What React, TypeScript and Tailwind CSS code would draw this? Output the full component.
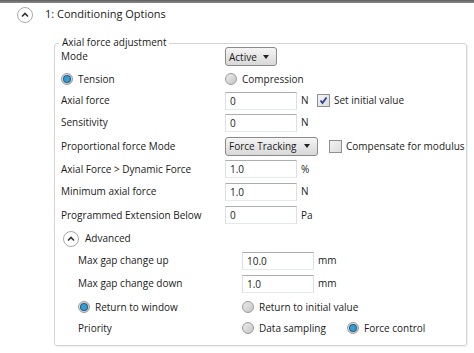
import React from 'react';

const font = { fontFamily: '"Open Sans", "Noto Sans", "Liberation Sans", sans-serif' };

function Chevron({ size = 16 }: { size?: number }) {
  return (
    <div
      className="rounded-full border border-[#a9a9a9] bg-white flex items-center justify-center shrink-0"
      style={{ width: size, height: size }}
    >
      <svg width="8" height="6" viewBox="0 0 8 6">
        <path d="M1 4.5 L4 1.5 L7 4.5" fill="none" stroke="#333" strokeWidth="1.6" />
      </svg>
    </div>
  );
}

function Radio({ checked = false, label }: { checked?: boolean; label: string }) {
  return (
    <div className="flex items-center gap-[5px]">
      <div className="w-[12px] h-[12px] rounded-full border border-[#9a9a9a] bg-gradient-to-br from-[#ececec] to-[#c6c6c6] flex items-center justify-center shrink-0">
        {checked && <div className="w-[6px] h-[6px] rounded-full bg-[#3b9bd0] ring-1 ring-[#1f5f86]" />}
      </div>
      <span>{label}</span>
    </div>
  );
}

function Check({ checked = false, label }: { checked?: boolean; label: string }) {
  return (
    <div className="flex items-center gap-[4px]">
      <div className="w-[13px] h-[13px] border border-[#8e8f8f] bg-gradient-to-br from-[#f4f4f4] to-[#dcdcdc] flex items-center justify-center shrink-0">
        {checked && (
          <svg width="9" height="9" viewBox="0 0 9 9">
            <path d="M1.5 4.5 L3.5 7 L7.5 1.5" fill="none" stroke="#2b3f93" strokeWidth="1.8" />
          </svg>
        )}
      </div>
      <span>{label}</span>
    </div>
  );
}

function Field({ value, unit, w = 'w-[72px]' }: { value: string; unit?: string; w?: string }) {
  return (
    <div className="flex items-center">
      <div className={`${w} h-[18px] border border-[#dbdfe6] border-t-[#abadb3] border-b-[#e3e9ef] bg-white pl-[4px] flex items-center leading-none`}>
        {value}
      </div>
      {unit && <span className="ml-[4px] w-[14px]">{unit}</span>}
    </div>
  );
}

function Select({ value, w }: { value: string; w: string }) {
  return (
    <div className={`${w} h-[19px] rounded-[3px] border border-[#8a8a8a] bg-gradient-to-b from-[#f5f5f5] to-[#d8d8d8] flex items-center justify-between pl-[3px] pr-[7px] leading-none`}>
      <span>{value}</span>
      <svg width="6" height="4" viewBox="0 0 6 4">
        <path d="M0 0 H6 L3 4 Z" fill="#222" />
      </svg>
    </div>
  );
}

function Row({ h, label, children }: { h: string; label?: React.ReactNode; children?: React.ReactNode }) {
  return (
    <div className={`${h} flex items-center`}>
      <div className="w-[164px] shrink-0">{label}</div>
      <div className="flex items-center">{children}</div>
    </div>
  );
}

export default function App() {
  return (
    <div className="w-[474px] h-[353px] bg-white overflow-hidden text-[#1a1a1a] text-[10px] whitespace-nowrap" style={font}>
      <div className="h-[3px] bg-gradient-to-b from-[#5e5e5e] to-[#8c8c8c]" />
      <div className="h-[22px] flex items-center pl-[17px] pt-[1px]">
        <Chevron size={16} />
        <span className="ml-[12px] text-[11px]">1: Conditioning Options</span>
      </div>
      <div className="relative mt-[18px] ml-[54px] w-[413px] h-[303px] border border-[#d5d5d5] rounded-[3px] shadow-[inset_1px_1px_0_#fff,1px_1px_0_#f0f0f0] pl-[6px] pt-[1px]">
        <span className="absolute -top-[8px] left-[4px] bg-white px-[3px] leading-[12px]">Axial force adjustment</span>

        <Row h="h-[23px]" label="Mode">
          <Select value="Active" w="w-[52px]" />
        </Row>
        <Row h="h-[22px]" label={<Radio checked label="Tension" />}>
          <Radio label="Compression" />
        </Row>
        <Row h="h-[21px]" label="Axial force">
          <Field value="0" unit="N" />
          <div className="ml-[2px]">
            <Check checked label="Set initial value" />
          </div>
        </Row>
        <Row h="h-[23px]" label="Sensitivity">
          <Field value="0" unit="N" />
        </Row>
        <Row h="h-[24px]" label="Proportional force Mode">
          <Select value="Force Tracking" w="w-[93px]" />
          <div className="ml-[11px]">
            <Check label="Compensate for modulus" />
          </div>
        </Row>
        <Row h="h-[22px]" label="Axial Force > Dynamic Force">
          <Field value="1.0" unit="%" />
        </Row>
        <Row h="h-[23px]" label="Minimum axial force">
          <Field value="1.0" unit="N" />
        </Row>
        <Row h="h-[24px]" label="Programmed Extension Below">
          <Field value="0" unit="Pa" />
        </Row>

        <div className="pl-[2px]">
          <div className="h-[23px] flex items-center">
            <Chevron size={16} />
            <span className="ml-[6px]">Advanced</span>
          </div>
          <div className="pl-[15px]">
            <Row h="h-[21px]" label="Max gap change up">
              <Field value="10.0" unit="mm" />
            </Row>
            <Row h="h-[25px]" label="Max gap change down">
              <Field value="1.0" unit="mm" />
            </Row>
            <Row h="h-[22px]" label={<Radio checked label="Return to window" />}>
              <Radio label="Return to initial value" />
            </Row>
            <Row h="h-[20px]" label="Priority">
              <div className="w-[105px]">
                <Radio label="Data sampling" />
              </div>
              <Radio checked label="Force control" />
            </Row>
          </div>
        </div>
      </div>
    </div>
  );
}
